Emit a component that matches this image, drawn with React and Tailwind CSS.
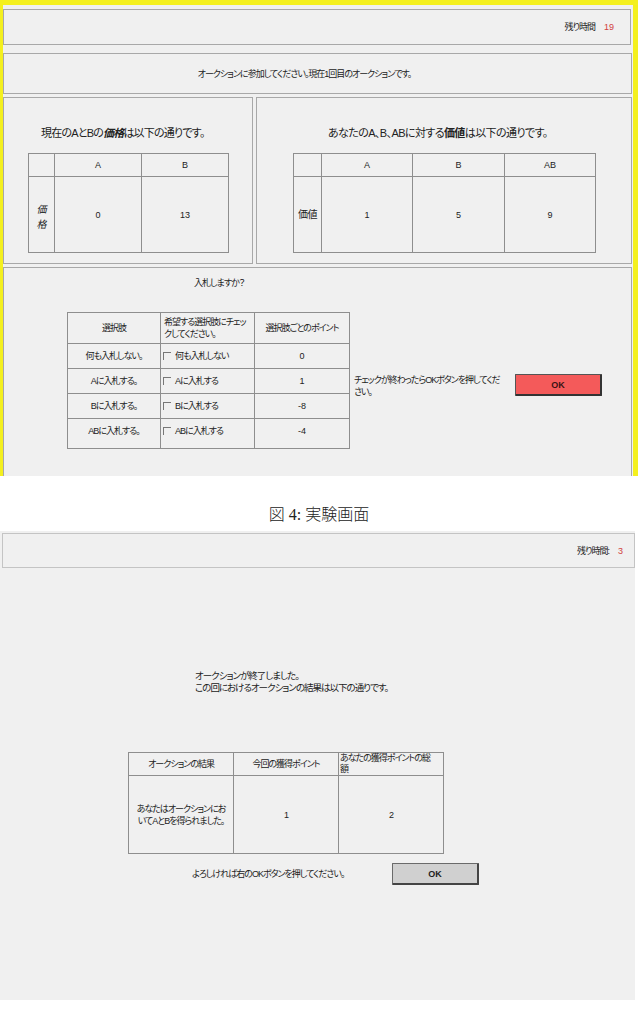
import React from 'react';

// shared font stack: Arial-width latin, JP gothic for kana/kanji, proportional kana
const ui = "font-['Liberation_Sans','Noto_Sans_CJK_JP',sans-serif] [font-feature-settings:'palt']";
const cell = 'border border-[#8e8e8e] p-0 font-normal';

const Check = ({ label }) => (
  <div className="flex items-center pl-[2px]">
    <span className="inline-block w-[8px] h-[8px] border-t border-l border-[#777] mr-[4px]" />
    <span className="whitespace-nowrap">{label}</span>
  </div>
);

const bidRows = [
  { name: '何も入札しない。', box: '何も入札しない', pt: '0' },
  { name: 'Aに入札する。', box: 'Aに入札する', pt: '1' },
  { name: 'Bに入札する。', box: 'Bに入札する', pt: '-8' },
  { name: 'ABに入札する。', box: 'ABに入札する', pt: '-4' },
];

const BidScreen = () => (
  <div className={`${ui} w-[638px] h-[476px] bg-[#f0f0f0] border-t-[5px] border-l-[3px] border-r-[5px] border-[#f4f01e] flex flex-col text-[9px] leading-[12px] tracking-[-1px] text-[#222]`}>
    {/* timer bar */}
    <div className="mt-[4px] mr-[2px] h-[36px] border border-[#a8a8a8] flex items-center justify-end pr-[16px] gap-[9px]">
      <span>残り時間</span>
      <span className="text-[#d24040] tracking-normal">19</span>
    </div>

    {/* round message */}
    <div className="mt-[8px] mr-[1px] h-[41px] border border-[#a8a8a8] flex items-center justify-center pr-[26px]">
      オークションに参加してください。現在1回目のオークションです。
    </div>

    {/* price / value panels */}
    <div className="mt-[3px] mr-[1px] h-[167px] flex gap-[3px]">
      <div className="w-[250px] border border-[#a8a8a8]">
        <div className="pl-[37px] pt-[28px] text-[11px] leading-[14px] tracking-[-0.8px]">
          現在のAとBの<b className="italic">価格</b>は以下の通りです。
        </div>
        <table className="ml-[24px] mt-[13px] border-collapse table-fixed tracking-normal">
          <tbody>
            <tr className="h-[23px]">
              <td className={`${cell} w-[26px]`} />
              <td className={`${cell} w-[87px] text-center`}>A</td>
              <td className={`${cell} w-[87px] text-center`}>B</td>
            </tr>
            <tr className="h-[76px]">
              <td className={`${cell} text-center font-bold italic text-[10px] leading-[15px] pt-[4px]`}>
                価<br />格
              </td>
              <td className={`${cell} text-center`}>0</td>
              <td className={`${cell} text-center`}>13</td>
            </tr>
          </tbody>
        </table>
      </div>

      <div className="flex-1 border border-[#a8a8a8]">
        <div className="pl-[71px] pt-[28px] text-[11px] leading-[14px] tracking-[-0.6px]">
          あなたのA、B、ABに対する<b>価値</b>は以下の通りです。
        </div>
        <table className="ml-[36px] mt-[13px] border-collapse table-fixed tracking-normal">
          <tbody>
            <tr className="h-[23px]">
              <td className={`${cell} w-[28px]`} />
              <td className={`${cell} w-[91px] text-center`}>A</td>
              <td className={`${cell} w-[92px] text-center`}>B</td>
              <td className={`${cell} w-[91px] text-center`}>AB</td>
            </tr>
            <tr className="h-[76px]">
              <td className={`${cell} text-center font-bold text-[10px] tracking-[-0.5px]`}>価値</td>
              <td className={`${cell} text-center`}>1</td>
              <td className={`${cell} text-center`}>5</td>
              <td className={`${cell} text-center`}>9</td>
            </tr>
          </tbody>
        </table>
      </div>
    </div>

    {/* bid form */}
    <div className="mt-[3px] mr-[1px] flex-1 border border-b-0 border-[#a8a8a8] pt-[9px]">
      <div className="pl-[190px]">入札しますか？</div>
      <div className="mt-[23px] pl-[63px] flex items-start">
        <table className="border-collapse table-fixed">
          <tbody>
            <tr className="h-[31px]">
              <td className={`${cell} w-[93px] text-center`}>選択肢</td>
              <td className={`${cell} w-[94px] text-left align-top pt-[3px] pl-[3px] whitespace-nowrap`}>
                希望する選択肢にチェッ<br />クしてください。
              </td>
              <td className={`${cell} w-[95px] text-center whitespace-nowrap`}>選択肢ごとのポイント</td>
            </tr>
            {bidRows.map((r, i) => (
              <tr key={r.name} className={i === 3 ? 'h-[30px]' : 'h-[25px]'}>
                <td className={`${cell} text-center ${i === 3 ? 'align-top pt-[6px]' : ''}`}>{r.name}</td>
                <td className={`${cell} ${i === 3 ? 'align-top pt-[6px]' : ''}`}>
                  <Check label={r.box} />
                </td>
                <td className={`${cell} text-center tracking-normal ${i === 3 ? 'align-top pt-[6px]' : ''}`}>{r.pt}</td>
              </tr>
            ))}
          </tbody>
        </table>
        <p className="ml-[4px] mt-[62px] w-[157px]">
          <span className="whitespace-nowrap">チェックが終わったらOKボタンを押してくだ</span>
          <br />さい。
        </p>
        <button className="ml-[4px] mt-[62px] w-[87px] h-[22px] bg-[#f45a5a] border border-[#555] border-r-2 border-b-2 border-r-[#333] border-b-[#333] rounded-[1px] font-bold text-[9px] tracking-normal text-[#3a1414]">
          OK
        </button>
      </div>
    </div>
  </div>
);

const ResultScreen = () => (
  <div className={`${ui} mt-[6px] w-[635px] h-[469px] bg-[#f0f0f0] flex flex-col text-[9px] leading-[12px] tracking-[-1px] text-[#222]`}>
    <div className="mt-[2px] ml-[2px] h-[35px] border border-[#c4c4c4] flex items-center justify-end pr-[11px] gap-[9px]">
      <span>残り時間:</span>
      <span className="text-[#d24040] tracking-normal">3</span>
    </div>

    <div className="mt-[102px] pl-[195px] text-[9.5px]">
      オークションが終了しました。<br />
      この回におけるオークションの結果は以下の通りです。
    </div>

    <table className="self-start w-[315px] ml-[128px] mt-[58px] border-collapse table-fixed">
      <tbody>
        <tr className="h-[22px]">
          <td className={`${cell} w-[105px] text-center`}>オークションの結果</td>
          <td className={`${cell} w-[105px] text-center`}>今回の獲得ポイント</td>
          <td className={`${cell} w-[105px] text-left align-top leading-[11px] pl-[1px] whitespace-nowrap`}>
            あなたの獲得ポイントの総<br />額
          </td>
        </tr>
        <tr className="h-[78px]">
          <td className={`${cell} text-center whitespace-nowrap`}>
            あなたはオークションにお<br />いてAとBを得られました。
          </td>
          <td className={`${cell} text-center`}>1</td>
          <td className={`${cell} text-center`}>2</td>
        </tr>
      </tbody>
    </table>

    <div className="mt-[9px] pl-[192px] flex items-center">
      <span className="w-[200px] whitespace-nowrap">よろしければ右のOKボタンを押してください。</span>
      <button className="w-[87px] h-[22px] bg-[#d0d0d0] border border-[#6a6a6a] border-r-2 border-b-2 border-r-[#444] border-b-[#444] rounded-[1px] font-bold text-[9px] tracking-normal text-[#222]">
        OK
      </button>
    </div>
  </div>
);

export default function App() {
  return (
    <div className="w-[638px] min-h-[1017px] bg-white">
      <BidScreen />
      <div className="pt-[29px] h-[49px] text-center text-[16px] leading-[20px] text-[#222] font-['Liberation_Serif','Noto_Sans_CJK_JP',serif] font-light">
        図 4: 実験画面
      </div>
      <ResultScreen />
    </div>
  );
}
